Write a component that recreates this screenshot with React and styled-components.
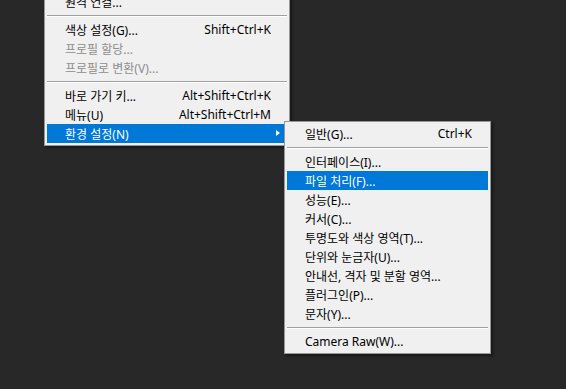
import React from 'react'
import styled, { createGlobalStyle } from 'styled-components'

const GlobalStyle = createGlobalStyle`
  html, body {
    margin: 0;
    padding: 0;
    background: #282828;
  }
  body {
    width: 566px;
    height: 389px;
    overflow: hidden;
    font-family: "Noto Sans", "Noto Sans CJK KR", sans-serif;
  }
`

const editMenu = [
  { label: '원격 연결...' },
  { sep: true },
  { label: '색상 설정(G)...', key: 'Shift+Ctrl+K' },
  { label: '프로필 할당...', disabled: true },
  { label: '프로필로 변환(V)...', disabled: true },
  { sep: true },
  { label: '바로 가기 키...', key: 'Alt+Shift+Ctrl+K' },
  { label: '메뉴(U)', key: 'Alt+Shift+Ctrl+M' },
  { label: '환경 설정(N)', active: true, sub: true },
]

const prefsMenu = [
  { label: '일반(G)...', key: 'Ctrl+K' },
  { sep: true },
  { label: '인터페이스(I)...' },
  { label: '파일 처리(F)...', active: true },
  { label: '성능(E)...' },
  { label: '커서(C)...' },
  { label: '투명도와 색상 영역(T)...' },
  { label: '단위와 눈금자(U)...' },
  { label: '안내선, 격자 및 분할 영역...' },
  { label: '플러그인(P)...' },
  { label: '문자(Y)...' },
  { sep: true },
  { label: 'Camera Raw(W)...' },
]

function Menu({ items, ...rest }) {
  return (
    <Popup {...rest}>
      {items.map((it, i) =>
        it.sep ? (
          <Separator key={i} />
        ) : (
          <Item key={i} $active={it.active} $disabled={it.disabled}>
            <span>{it.label}</span>
            {it.key && <Shortcut>{it.key}</Shortcut>}
            {it.sub && <Arrow />}
          </Item>
        )
      )}
    </Popup>
  )
}

export default function App() {
  return (
    <>
      <GlobalStyle />
      <Workspace>
        <Menu items={editMenu} $left={44} $top={-11} $width={246} />
        <Menu items={prefsMenu} $left={284} $top={121} $width={207} />
      </Workspace>
    </>
  )
}

const Workspace = styled.div`
  position: relative;
  width: 566px;
  height: 389px;
  background: #282828;
`

const Popup = styled.div`
  position: absolute;
  left: ${p => p.$left}px;
  top: ${p => p.$top}px;
  width: ${p => p.$width}px;
  box-sizing: border-box;
  display: flex;
  flex-direction: column;
  padding: 2px;
  background: #f0f0f0;
  border: 1px solid #979797;
  box-shadow: 2px 2px 3px rgba(0, 0, 0, 0.45);
`

const Item = styled.div`
  position: relative;
  height: 19px;
  display: flex;
  align-items: center;
  justify-content: space-between;
  padding: 0 16px 0 18px;
  font-size: 12px;
  white-space: nowrap;
  color: ${p => (p.$active ? '#fff' : p.$disabled ? '#8d8d8d' : '#000')};
  background: ${p => (p.$active ? '#0078d7' : 'transparent')};
`

const Shortcut = styled.span`
  margin-left: 20px;
`

const Arrow = styled.span`
  position: absolute;
  right: 7px;
  top: 6px;
  width: 0;
  height: 0;
  border-top: 3.5px solid transparent;
  border-bottom: 3.5px solid transparent;
  border-left: 4px solid #fff;
`

const Separator = styled.div`
  height: 9px;
  display: flex;
  align-items: center;

  &::before {
    content: '';
    flex: 1;
    height: 0;
    border-top: 1px solid #a0a0a0;
    border-bottom: 1px solid #fff;
  }
`
